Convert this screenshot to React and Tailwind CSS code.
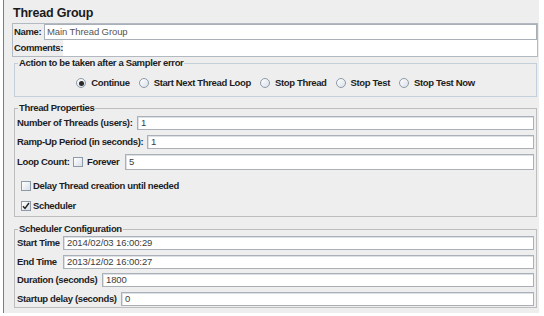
import React from "react";

const font = { fontFamily: '"Liberation Sans", Arial, sans-serif' };

function Field({ value, h = "h-[14px]" }) {
  return (
    <div
      className={`${h} flex-1 bg-white border border-[#a9b0b8] shadow-[inset_1px_1px_0_#dde1e5] pl-[3px] flex items-center text-[9.5px] text-[#3c3c3c] tracking-[-0.1px] whitespace-nowrap`}
    >
      {value}
    </div>
  );
}

function Label({ children, w }) {
  return (
    <div className={`${w} shrink-0 text-[9.5px] font-bold text-[#1d1d24] tracking-[-0.35px] whitespace-nowrap leading-[12px]`}>
      {children}
    </div>
  );
}

function Radio({ checked }) {
  return (
    <div className="w-[10px] h-[10px] shrink-0 rounded-full border border-[#8e9aa8] bg-gradient-to-br from-white to-[#d9e0e8] flex items-center justify-center">
      {checked && <div className="w-[5px] h-[5px] rounded-full bg-[#2a2a2a]" />}
    </div>
  );
}

function Check({ checked }) {
  return (
    <div className="w-[10px] h-[10px] shrink-0 border border-[#8e9aa8] bg-gradient-to-br from-white to-[#d9e0e8] flex items-center justify-center">
      {checked && (
        <svg width="8" height="8" viewBox="0 0 8 8">
          <path d="M1 4.2 L3 6.5 L7 1" fill="none" stroke="#222" strokeWidth="1.4" />
        </svg>
      )}
    </div>
  );
}

function RadioItem({ label, checked }) {
  return (
    <div className="flex items-center">
      <Radio checked={checked} />
      <span className="ml-[5px] text-[9.5px] font-bold text-[#1d1d24] tracking-[-0.35px] whitespace-nowrap leading-[12px]">
        {label}
      </span>
    </div>
  );
}

function Legend({ children }) {
  return (
    <legend className="ml-[1px] px-[1px] text-[9.5px] font-bold text-[#1d1d24] tracking-[-0.35px] leading-[12px]">
      {children}
    </legend>
  );
}

export default function App() {
  return (
    <div className="w-[544px] h-[316px] bg-white overflow-hidden" style={font}>
      <div className="ml-[3px] w-[536px] h-[313px] border-l border-[#7d7d7d] bg-[#eeeeee] pl-[8px] pr-[1px] flex flex-col">
        <div className="ml-[1px] mt-[5px] h-[16px] leading-[16px] text-[12.5px] font-bold text-[#1a1a1a] tracking-[-0.2px]">
          Thread Group
        </div>

        <div className="mt-[2px] border border-[#b3b9c0] flex flex-col">
          <div className="h-[16px] flex items-center">
            <div className="pl-[1px]">
              <Label w="w-[30px]">Name:</Label>
            </div>
            <div className="h-[16px] flex-1 bg-white border border-[#a9b0b8] pl-[2px] flex items-center text-[9.5px] text-[#555] tracking-[-0.1px]">
              Main Thread Group
            </div>
          </div>
          <div className="h-[16px] flex items-center">
            <div className="pl-[1px]">
              <Label w="w-[49px]">Comments:</Label>
            </div>
            <div className="h-[16px] flex-1 bg-white" />
          </div>
        </div>

        <fieldset className="ml-[2px] mr-[1px] border border-[#c3cfdb] px-[2px] pb-[8px]">
          <Legend>Action to be taken after a Sampler error</Legend>
          <div className="mt-[9px] h-[10px] flex items-center justify-center gap-[9px]">
            <RadioItem label="Continue" checked />
            <RadioItem label="Start Next Thread Loop" />
            <RadioItem label="Stop Thread" />
            <RadioItem label="Stop Test" />
            <RadioItem label="Stop Test Now" />
          </div>
        </fieldset>

        <fieldset className="mt-[5px] ml-[2px] mr-[1px] border border-[#bdbdbd] px-[2px] pb-[5px]">
          <Legend>Thread Properties</Legend>
          <div className="mt-[2px] h-[14px] flex items-center">
            <Label w="w-[120px]">Number of Threads (users):</Label>
            <Field value="1" />
          </div>
          <div className="mt-[5px] h-[14px] flex items-center">
            <Label w="w-[130px]">Ramp-Up Period (in seconds):</Label>
            <Field value="1" />
          </div>
          <div className="mt-[5px] h-[16px] flex items-center">
            <Label w="w-[56px]">Loop Count:</Label>
            <Check />
            <div className="ml-[4px] w-[38px]">
              <Label w="w-[38px]">Forever</Label>
            </div>
            <Field value="5" h="h-[16px]" />
          </div>
          <div className="mt-[11px] h-[10px] flex items-center pl-[4px]">
            <Check />
            <div className="ml-[2px]">
              <Label w="w-auto">Delay Thread creation until needed</Label>
            </div>
          </div>
          <div className="mt-[10px] h-[10px] flex items-center pl-[4px]">
            <Check checked />
            <div className="ml-[2px]">
              <Label w="w-auto">Scheduler</Label>
            </div>
          </div>
        </fieldset>

        <fieldset className="mt-[6px] ml-[2px] mr-[1px] border border-[#bdbdbd] px-[2px] pb-[1px]">
          <Legend>Scheduler Configuration</Legend>
          <div className="mt-[1px] h-[14px] flex items-center">
            <Label w="w-[46px]">Start Time</Label>
            <Field value="2014/02/03 16:00:29" />
          </div>
          <div className="mt-[5px] h-[14px] flex items-center">
            <Label w="w-[46px]">End Time</Label>
            <Field value="2013/12/02 16:00:27" />
          </div>
          <div className="mt-[4px] h-[14px] flex items-center">
            <Label w="w-[85px]">Duration (seconds)</Label>
            <Field value="1800" />
          </div>
          <div className="mt-[5px] h-[14px] flex items-center">
            <Label w="w-[104px]">Startup delay (seconds)</Label>
            <Field value="0" />
          </div>
        </fieldset>
      </div>
    </div>
  );
}
